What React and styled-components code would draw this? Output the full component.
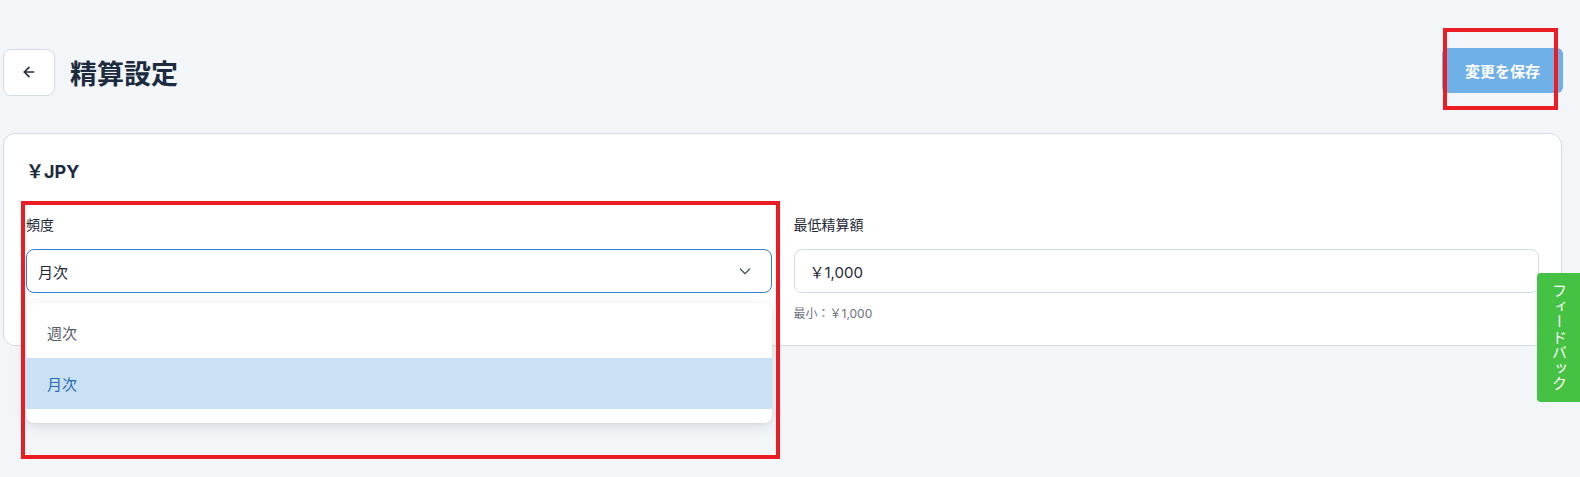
import React from 'react';
import styled, { createGlobalStyle } from 'styled-components';

const GlobalStyle = createGlobalStyle`
  html, body {
    margin: 0;
    padding: 0;
    background: #f3f6f9;
  }
  body {
    font-family: Inter, "Noto Sans CJK JP", "Noto Sans", sans-serif;
    color: #1e2a3b;
  }
`

const Page = styled.div`
  position: relative;
  min-height: 477px;
  box-sizing: border-box;
  padding: 48px 18px 0 3px;
`

const Header = styled.div`
  display: flex;
  align-items: center;
  justify-content: space-between;
  height: 48px;
  margin-bottom: 37px;
`

const TitleGroup = styled.div`
  display: flex;
  align-items: center;
  gap: 15px;
`

const BackButton = styled.button`
  width: 52px;
  height: 47px;
  display: flex;
  align-items: center;
  justify-content: center;
  background: #fff;
  border: 1px solid #d3dbe5;
  border-radius: 8px;
  color: #1e2a3b;
  padding: 0;
`

const Title = styled.h1`
  margin: 0;
  font-size: 27px;
  font-weight: 700;
  color: #1c2b40;
`

const SaveButton = styled.button`
  width: 121px;
  height: 45px;
  margin-top: -3px;
  margin-right: -1px;
  border: none;
  border-radius: 6px;
  background: #70b0e8;
  color: #fff;
  font-family: inherit;
  font-size: 15px;
  font-weight: 700;
`

const Card = styled.section`
  background: #fff;
  border: 1px solid #d3dbe5;
  border-radius: 12px;
  padding: 26px 22px 23px 22px;
`

const CardTitle = styled.h2`
  margin: 0 0 31px 0;
  font-size: 18px;
  font-weight: 700;
  line-height: 24px;
  color: #1c2b40;
`

const Grid = styled.div`
  display: grid;
  grid-template-columns: 1fr 1fr;
  column-gap: 22px;
`

const Field = styled.div`
  display: flex;
  flex-direction: column;
`

const Label = styled.label`
  font-size: 14px;
  line-height: 20px;
  color: #1f2937;
  margin-bottom: 14px;
`

const SelectWrap = styled.div`
  position: relative;
`

const SelectBox = styled.div`
  height: 44px;
  box-sizing: border-box;
  display: flex;
  align-items: center;
  justify-content: space-between;
  padding: 0 18px 0 11px;
  border: 1px solid ${(p) => (p.$focused ? '#2f7fd6' : '#d3dbe5')};
  border-radius: 8px;
  font-size: 15px;
  color: #1f2937;
  background: #fff;
`

const Menu = styled.ul`
  position: absolute;
  top: calc(100% + 10px);
  left: 0;
  right: 0;
  margin: 0;
  padding: 4px 0 14px 0;
  list-style: none;
  background: #fff;
  border-radius: 8px;
  box-shadow: 0 4px 14px rgba(30, 42, 59, 0.12), 0 1px 3px rgba(30, 42, 59, 0.06);
  z-index: 5;
`

const MenuItem = styled.li`
  height: 51px;
  display: flex;
  align-items: center;
  padding: 0 21px;
  font-size: 15px;
  color: ${(p) => (p.$selected ? '#2b6cb0' : '#555d66')};
  background: ${(p) => (p.$selected ? '#c9e0f5' : '#fff')};
`

const TextInput = styled.div`
  height: 44px;
  box-sizing: border-box;
  display: flex;
  align-items: center;
  padding: 0 15px;
  border: 1px solid #d3dbe5;
  border-radius: 8px;
  font-size: 15px;
  color: #1f2937;
`

const Hint = styled.div`
  margin-top: 13px;
  font-size: 12px;
  line-height: 16px;
  color: #6b7280;
`

const FeedbackTab = styled.div`
  position: absolute;
  right: 0;
  top: 273px;
  width: 43px;
  height: 129px;
  box-sizing: border-box;
  background: #45c144;
  border-radius: 4px 0 0 4px;
  color: #fff;
  font-size: 15px;
  writing-mode: vertical-rl;
  display: flex;
  align-items: center;
  justify-content: center;
  letter-spacing: 0.5px;
`

const Annotation = styled.div`
  position: absolute;
  box-sizing: border-box;
  border: 4px solid #ea1c24;
  pointer-events: none;
  z-index: 10;
  left: ${(p) => p.$x}px;
  top: ${(p) => p.$y}px;
  width: ${(p) => p.$w}px;
  height: ${(p) => p.$h}px;
`

const ArrowLeft = () => (
  <svg width="16" height="16" viewBox="0 0 24 24" fill="none" stroke="currentColor" strokeWidth="2.4" strokeLinecap="round" strokeLinejoin="round">
    <path d="M19 12H5" />
    <path d="M12 19l-7-7 7-7" />
  </svg>
);

const Chevron = () => (
  <svg width="16" height="16" viewBox="0 0 24 24" fill="none" stroke="#4b5563" strokeWidth="2" strokeLinecap="round" strokeLinejoin="round">
    <path d="M5 9l7 7 7-7" />
  </svg>
);

export default function App() {
  return (
    <>
      <GlobalStyle />
      <Page>
        <Header>
          <TitleGroup>
            <BackButton aria-label="戻る">
              <ArrowLeft />
            </BackButton>
            <Title>精算設定</Title>
          </TitleGroup>
          <SaveButton>変更を保存</SaveButton>
        </Header>

        <Card>
          <CardTitle>￥JPY</CardTitle>
          <Grid>
            <Field>
              <Label>頻度</Label>
              <SelectWrap>
                <SelectBox $focused>
                  <span>月次</span>
                  <Chevron />
                </SelectBox>
                <Menu>
                  <MenuItem>週次</MenuItem>
                  <MenuItem $selected>月次</MenuItem>
                </Menu>
              </SelectWrap>
            </Field>
            <Field>
              <Label>最低精算額</Label>
              <TextInput>￥1,000</TextInput>
              <Hint>最小：￥1,000</Hint>
            </Field>
          </Grid>
        </Card>

        <FeedbackTab>フィードバック</FeedbackTab>
        <Annotation $x={1443} $y={28} $w={115} $h={82} />
        <Annotation $x={21} $y={201} $w={759} $h={258} />
      </Page>
    </>
  );
}
